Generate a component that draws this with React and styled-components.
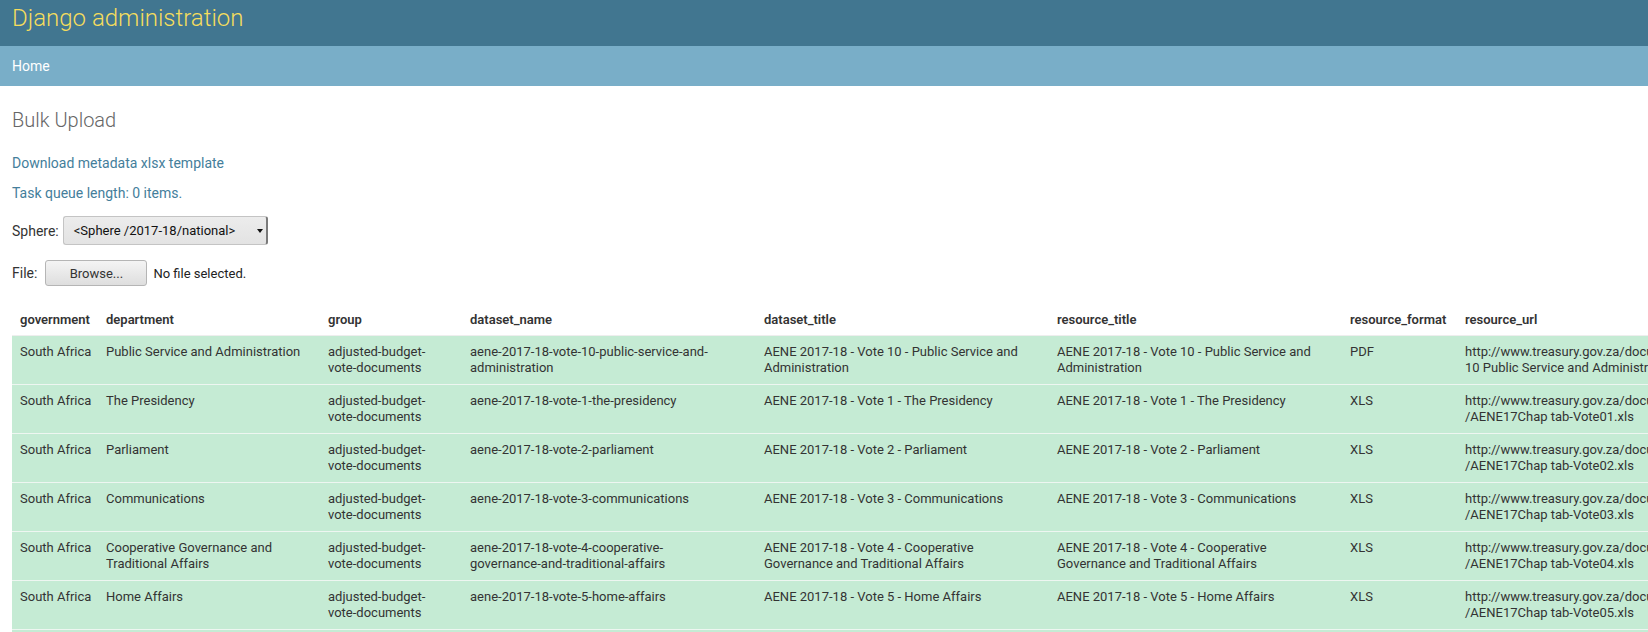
import styled, { createGlobalStyle } from "styled-components";

const GlobalStyle = createGlobalStyle`
  html, body {
    margin: 0;
    padding: 0;
    overflow: hidden;
    background: #fff;
  }
  body {
    font-family: Roboto, "Liberation Sans", sans-serif;
    font-size: 14px;
    color: #333;
  }
`;

const Page = styled.div`
  width: 1648px;
  height: 632px;
  overflow: hidden;
`;

const Header = styled.div`
  height: 46px;
  box-sizing: border-box;
  padding: 4px 12px 0;
  background: #417690;
`;

const Branding = styled.h1`
  margin: 0;
  font-size: 24px;
  line-height: 28px;
  font-weight: 300;
  color: #f5dd5d;
`;

const Breadcrumbs = styled.div`
  height: 40px;
  box-sizing: border-box;
  padding: 10px 12px;
  background: #79aec8;
  font-size: 14px;
  line-height: 20px;
  a {
    color: #fff;
    text-decoration: none;
  }
`;

const Content = styled.div`
  padding: 20px 12px 0;
`;

const Title = styled.h1`
  margin: 0 0 19px;
  font-size: 20px;
  line-height: 28px;
  font-weight: 300;
  color: #666;
`;

const Para = styled.p`
  margin: 0 0 ${(p) => p.$gap || 0}px;
  line-height: 20px;
  a {
    color: #447e9b;
    text-decoration: none;
  }
`;

const FieldRow = styled.div`
  display: flex;
  align-items: center;
  gap: ${(p) => p.$gap || 4}px;
  height: ${(p) => p.$height}px;
  margin-bottom: ${(p) => p.$gap2 || 0}px;
`;

const Label = styled.span`
  font-size: 14px;
  color: #333;
`;

const SelectBox = styled.div`
  display: flex;
  align-items: center;
  justify-content: space-between;
  width: 205px;
  height: 29px;
  box-sizing: border-box;
  padding-left: 10px;
  border: 1px solid #c4c4c4;
  border-right: 2px solid #7a7a7a;
  border-radius: 3px;
  background: linear-gradient(#ececec, #e3e3e3);
  font-size: 13px;
  color: #111;
`;

const Arrow = styled.span`
  width: 0;
  height: 0;
  margin-right: 3px;
  border-left: 3px solid transparent;
  border-right: 3px solid transparent;
  border-top: 4px solid #111;
`;

const BrowseButton = styled.div`
  display: flex;
  align-items: center;
  justify-content: center;
  width: 102px;
  height: 26px;
  box-sizing: border-box;
  border: 1px solid #b5b5b5;
  border-radius: 3px;
  background: linear-gradient(#f4f4f4, #dedede);
  font-size: 13px;
  color: #333;
`;

const FileNote = styled.span`
  margin-left: -2px;
  font-size: 13px;
  color: #222;
`;

const Table = styled.table`
  border-collapse: collapse;
  table-layout: fixed;
  width: 1870px;
  margin-top: 18px;
  font-size: 13px;
  line-height: 16px;
  color: #333;
`;

const Th = styled.th`
  width: ${(p) => p.$w - 16}px;
  padding: 8px 8px 7px;
  text-align: left;
  vertical-align: top;
  font-weight: 600;
  color: #333;
  border-bottom: 1px solid #eee;
`;

const Row = styled.tr`
  background: #c5ebd4;
`;

const Td = styled.td`
  padding: 8px;
  vertical-align: top;
  border-bottom: 1px solid #eef6f1;
  white-space: ${(p) => (p.$nowrap ? "pre" : "pre-line")};
`;

const columns = [
  ["government", 86],
  ["department", 222],
  ["group", 142],
  ["dataset_name", 294],
  ["dataset_title", 293],
  ["resource_title", 293],
  ["resource_format", 115],
  ["resource_url", 425],
];

const urlBase = "http://www.treasury.gov.za/documents/mtbps/2017/aene/";

const rows = [
  {
    dept: "Public Service and Administration",
    name: "aene-2017-18-vote-10-public-service-and-\nadministration",
    title: "AENE 2017-18 - Vote 10 - Public Service and\nAdministration",
    fmt: "PDF",
    url: urlBase + "Vote\n10 Public Service and Administration.pdf",
  },
  {
    dept: "The Presidency",
    name: "aene-2017-18-vote-1-the-presidency",
    title: "AENE 2017-18 - Vote 1 - The Presidency",
    fmt: "XLS",
    url: urlBase + "excel\n/AENE17Chap tab-Vote01.xls",
  },
  {
    dept: "Parliament",
    name: "aene-2017-18-vote-2-parliament",
    title: "AENE 2017-18 - Vote 2 - Parliament",
    fmt: "XLS",
    url: urlBase + "excel\n/AENE17Chap tab-Vote02.xls",
  },
  {
    dept: "Communications",
    name: "aene-2017-18-vote-3-communications",
    title: "AENE 2017-18 - Vote 3 - Communications",
    fmt: "XLS",
    url: urlBase + "excel\n/AENE17Chap tab-Vote03.xls",
  },
  {
    dept: "Cooperative Governance and\nTraditional Affairs",
    name: "aene-2017-18-vote-4-cooperative-\ngovernance-and-traditional-affairs",
    title: "AENE 2017-18 - Vote 4 - Cooperative\nGovernance and Traditional Affairs",
    fmt: "XLS",
    url: urlBase + "excel\n/AENE17Chap tab-Vote04.xls",
  },
  {
    dept: "Home Affairs",
    name: "aene-2017-18-vote-5-home-affairs",
    title: "AENE 2017-18 - Vote 5 - Home Affairs",
    fmt: "XLS",
    url: urlBase + "excel\n/AENE17Chap tab-Vote05.xls",
  },
  {
    dept: "International Relations and\nCooperation",
    name: "aene-2017-18-vote-6-international-\nrelations-and-cooperation",
    title: "AENE 2017-18 - Vote 6 - International\nRelations and Cooperation",
    fmt: "XLS",
    url: urlBase + "excel\n/AENE17Chap tab-Vote06.xls",
  },
];

export default function App() {
  return (
    <Page>
      <GlobalStyle />
      <Header>
        <Branding>Django administration</Branding>
      </Header>
      <Breadcrumbs>
        <a href="#">Home</a>
      </Breadcrumbs>
      <Content>
        <Title>Bulk Upload</Title>
        <Para $gap={10}>
          <a href="#">Download metadata xlsx template</a>
        </Para>
        <Para $gap={12}>
          <a href="#">Task queue length: 0 items.</a>
        </Para>
        <FieldRow $height={31} $gap2={14}>
          <Label>Sphere:</Label>
          <SelectBox>
            {"<Sphere /2017-18/national>"}
            <Arrow />
          </SelectBox>
        </FieldRow>
        <FieldRow $height={26} $gap={8}>
          <Label>File:</Label>
          <BrowseButton>Browse...</BrowseButton>
          <FileNote>No file selected.</FileNote>
        </FieldRow>
        <Table>
          <thead>
            <tr>
              {columns.map(([name, w]) => (
                <Th key={name} $w={w}>
                  {name}
                </Th>
              ))}
            </tr>
          </thead>
          <tbody>
            {rows.map((r) => (
              <Row key={r.name}>
                <Td $nowrap>South Africa</Td>
                <Td>{r.dept}</Td>
                <Td>{"adjusted-budget-\nvote-documents"}</Td>
                <Td>{r.name}</Td>
                <Td>{r.title}</Td>
                <Td>{r.title}</Td>
                <Td>{r.fmt}</Td>
                <Td $nowrap>{r.url}</Td>
              </Row>
            ))}
          </tbody>
        </Table>
      </Content>
    </Page>
  );
}
